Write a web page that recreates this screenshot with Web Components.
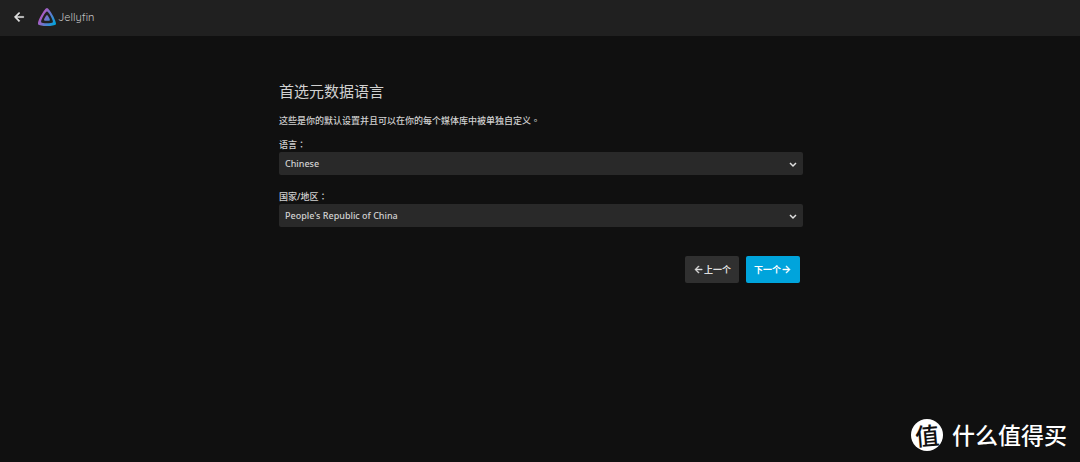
<!DOCTYPE html>
<html lang="zh-Hant">
<head>
<meta charset="utf-8">
<meta name="viewport" content="width=device-width, initial-scale=1">
<title>Jellyfin</title>
<style>
body { margin: 0; background: #101010; color: #d1d1d1; font-family: "Noto Sans", "Noto Sans CJK TC", sans-serif; font-size: 9px; }
</style>
</head>
<body>
<setup-page>
  <app-header slot="header"></app-header>
  <setup-form heading="首选元数据语言">
    <span slot="description">这些是你的默认设置并且可以在你的每个媒体库中被单独自定义。</span>
    <select-field label="语言：" value="Chinese"></select-field>
    <select-field label="国家/地区：" value="People's Republic of China"></select-field>
    <nav-button slot="actions" direction="back">上一个</nav-button>
    <nav-button slot="actions" direction="next">下一个</nav-button>
  </setup-form>
  <site-mark slot="mark" lang="zh-Hans"></site-mark>
</setup-page>
<script>
class BaseElement extends HTMLElement {
  connectedCallback() {
    if (!this.shadowRoot) this.attachShadow({ mode: "open" }).innerHTML = this.render();
  }
}

customElements.define("setup-page", class extends BaseElement {
  render() {
    return `<style>
      :host { display: flex; flex-direction: column; min-height: 100vh; }
      main { flex: 1; display: flex; justify-content: center; padding: 43px 16px 0 18px; }
      footer { display: flex; justify-content: flex-end; padding: 0 12px 10px; }
    </style>
    <slot name="header"></slot>
    <main><slot></slot></main>
    <footer><slot name="mark"></slot></footer>`;
  }
});

customElements.define("app-header", class extends BaseElement {
  render() {
    return `<style>
      :host { display: block; background: #202020; }
      header { display: flex; align-items: center; height: 34px; padding: 0 12px 2px; gap: 12px; }
      button { display: flex; padding: 0; border: 0; background: none; color: #e4e4e4; }
      a { display: flex; align-items: center; gap: 2px; color: #c4c4c4; text-decoration: none; font: 400 11px Quicksand, Lato, sans-serif; }
      svg { display: block; }
    </style>
    <header>
      <button type="button" aria-label="返回"><svg width="14" height="14" viewBox="0 0 24 24"><path fill="currentColor" stroke="currentColor" d="M20 11H7.83l5.59-5.59L12 4l-8 8 8 8 1.41-1.41L7.83 13H20z"/></svg></button>
      <a href="#"><svg width="18" height="18" viewBox="0 0 512 512">
        <linearGradient id="g" x1="110" y1="213" x2="497" y2="437" gradientUnits="userSpaceOnUse"><stop stop-color="#aa5cc3"/><stop offset="1" stop-color="#00a4dc"/></linearGradient>
        <g fill="url(#g)"><path d="M256 196.200c-22.400 0-94.800 131.300-83.800 153.400s156.800 21.900 167.700 0-61.300-153.400-83.900-153.400z"/><path fill-rule="evenodd" d="M256 0C188.300 0-29.800 395.400 3.400 462.200s472.300 66 505.200 0S323.800 0 256 0zm165.600 404.300c-21.600 43.200-309.300 43.800-331.100 0S211.700 101.400 256 101.400 443.200 361 421.600 404.300z"/></g>
      </svg><span>Jellyfin</span></a>
    </header>`;
  }
});

customElements.define("setup-form", class extends BaseElement {
  render() {
    return `<style>
      :host { display: block; width: 524px; max-width: 100%; }
      h1 { margin: 0 0 11px; font-size: 15px; line-height: 24px; font-weight: 400; }
      p { margin: 0 0 11px; line-height: 13px; font-weight: 500; }
      .fields { display: grid; gap: 15px; }
      .actions { display: flex; justify-content: flex-end; gap: 7px; padding: 29px 3px 0 0; }
    </style>
    <form>
      <h1>${this.getAttribute("heading")}</h1>
      <p><slot name="description"></slot></p>
      <div class="fields"><slot></slot></div>
      <div class="actions"><slot name="actions"></slot></div>
    </form>`;
  }
});

customElements.define("select-field", class extends BaseElement {
  render() {
    return `<style>
      :host { display: block; }
      label { display: block; padding-bottom: 1px; line-height: 13px; font-weight: 500; }
      .box { display: grid; align-items: center; }
      select, svg { grid-area: 1 / 1; }
      select { appearance: none; width: 100%; height: 23px; padding: 0 24px 0 6px; border: 0; border-radius: 2px; background: #292929; color: #d1d1d1; font: inherit; font-weight: 500; }
      svg { justify-self: end; margin-right: 5px; color: #e0e0e0; pointer-events: none; }
    </style>
    <label for="choice">${this.getAttribute("label")}</label>
    <div class="box">
      <select id="choice"><option>${this.getAttribute("value")}</option></select>
      <svg width="10" height="10" viewBox="0 0 10 10"><path d="M2 4l3 3 3-3" fill="none" stroke="currentColor" stroke-width="1.500"/></svg>
    </div>`;
  }
});

customElements.define("nav-button", class extends BaseElement {
  render() {
    const next = this.getAttribute("direction") === "next";
    const arrow = next
      ? "M4 11h12.170l-5.590-5.590L12 4l8 8-8 8-1.410-1.410L16.170 13H4z"
      : "M20 11H7.830l5.590-5.590L12 4l-8 8 8 8 1.410-1.410L7.830 13H20z";
    return `<style>
      :host { display: block; }
      button { display: flex; flex-direction: ${next ? "row-reverse" : "row"}; align-items: center; justify-content: center; width: 54px; height: 27px; padding: 0; border: 0; border-radius: 2px; background: ${next ? "#00a4dc" : "#303030"}; color: ${next ? "#fff" : "#dedede"}; font: inherit; font-weight: 700; }
    </style>
    <button type="button"><svg width="11" height="11" viewBox="0 0 24 24" aria-hidden="true"><path fill="currentColor" stroke="currentColor" d="${arrow}"/></svg><span><slot></slot></span></button>`;
  }
});

customElements.define("site-mark", class extends BaseElement {
  render() {
    return `<style>
      :host { display: flex; align-items: center; gap: 9px; color: #fff; font: 500 23px/32px "Noto Sans CJK SC", sans-serif; }
      .seal { display: grid; place-items: center; width: 32px; height: 32px; border-radius: 50%; background: #fff; color: #101010; font-size: 24px; line-height: 30px; }
      .seal span { transform: rotate(-5deg); }
      .name { padding: 0 1px 2px 0; }
    </style>
    <div class="seal"><span>值</span></div><div class="name">什么值得买</div>`;
  }
});
</script>
</body>
</html>
